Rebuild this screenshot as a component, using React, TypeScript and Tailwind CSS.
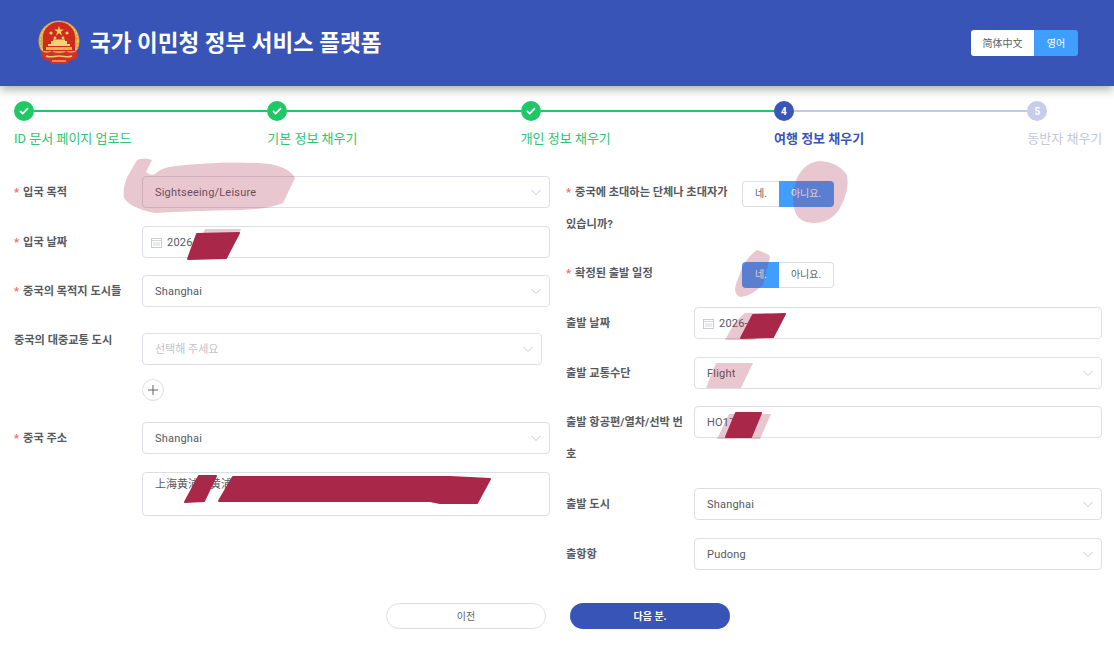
import type { ReactNode } from 'react';

const steps = [
  { label: 'ID 문서 페이지 업로드', state: 'done' },
  { label: '기본 정보 채우기', state: 'done' },
  { label: '개인 정보 채우기', state: 'done' },
  { label: '여행 정보 채우기', state: 'active' },
  { label: '동반자 채우기', state: 'todo' },
];

const Chevron = () => (
  <svg width="12" height="12" viewBox="0 0 12 12" fill="none" className="shrink-0">
    <path d="M1.5 4 6 8.5 10.5 4" stroke="#c8ccd4" strokeWidth="1" />
  </svg>
);

const CalendarIcon = () => (
  <svg width="11" height="11" viewBox="0 0 11 11" fill="none" className="mr-[5px] shrink-0">
    <rect x="0.5" y="1.5" width="10" height="9" stroke="#c8ccd4" />
    <path d="M0.5 3.5h10M2 6h7M2 8h7" stroke="#d5d8de" />
  </svg>
);

const Emblem = () => (
  <svg width="42" height="46" viewBox="0 0 42 46" className="shrink-0">
    <circle cx="21" cy="21" r="20.5" fill="#d9a441" />
    <circle cx="21" cy="21" r="18.8" fill="none" stroke="#f0c96a" strokeWidth="1.5" strokeDasharray="2 1.5" />
    <path d="M5 31V17A16 15 0 0 1 37 17V31Z" fill="#cf2a20" />
    <path d="M21 6l1.2 3.6h3.6l-3 2.2 1.2 3.6-3-2.2-3 2.2 1.2-3.6-3-2.2h3.6Z" fill="#f7d35c" />
    <circle cx="13" cy="13" r="1.6" fill="#f7d35c" />
    <circle cx="29" cy="13" r="1.6" fill="#f7d35c" />
    <circle cx="17" cy="18" r="1.4" fill="#f7d35c" />
    <circle cx="25" cy="18" r="1.4" fill="#f7d35c" />
    <path d="M10 24h22v2H10ZM13 21h16v3H13ZM15 19.5h12v1.5H15Z" fill="#f3d27a" />
    <path d="M8 27h26v3H8Z" fill="#e8b64f" />
    <path d="M3 30c4 4 8 3 11 1 3 3 11 3 14 0 3 2 7 3 11-1l1 7c-3 3-7 3-9 4l-1 3H13l-1-3c-3-1-6-1-9-4Z" fill="#d4302a" />
    <path d="M8 36c4 2 8 0 13 0s9 2 13 0" stroke="#f0c96a" strokeWidth="1.6" fill="none" />
    <path d="M14 41h14" stroke="#f0c96a" strokeWidth="1.2" />
  </svg>
);

const Step = ({ label, state, last }: { label: string; state: string; last?: boolean }) => {
  const lineColor = state === 'done' ? 'bg-[#1fc766]' : 'bg-[#c1c9e5]';
  const circle =
    state === 'done' ? 'bg-[#1fc766]' : state === 'active' ? 'bg-[#3955b8]' : 'bg-[#c6cdea]';
  const text =
    state === 'done'
      ? 'text-[#2ec472]'
      : state === 'active'
        ? 'text-[#3955b8] font-bold'
        : 'text-[#c3c8d9]';
  const num = state === 'active' ? '4' : '5';
  return (
    <div className={last ? 'w-[74px] shrink-0' : 'w-[253.33px] shrink-0'}>
      <div className="flex h-5 items-center">
        <div className={`flex h-5 w-5 shrink-0 items-center justify-center rounded-full ${circle}`}>
          {state === 'done' ? (
            <svg width="10" height="8" viewBox="0 0 10 8" fill="none">
              <path d="M1 4l2.7 2.6L9 1.2" stroke="#fff" strokeWidth="1.8" />
            </svg>
          ) : (
            <span className="text-[10px] font-bold text-white">{num}</span>
          )}
        </div>
        {!last && <div className={`h-[2px] flex-1 ${lineColor}`} />}
      </div>
      <div className={`mt-2 whitespace-nowrap text-[13px] leading-5 ${text}`}>{label}</div>
    </div>
  );
};

const Label = ({
  required,
  children,
  width,
  compact,
}: {
  required?: boolean;
  children: ReactNode;
  width: string;
  compact?: boolean;
}) => (
  <div
    className={`shrink-0 pr-[8px] text-[11.2px] font-bold text-[#555a61] ${width} ${
      compact ? 'leading-[15px]' : '-mb-px pt-px leading-8'
    }`}
  >
    {required && <span className="mr-1 text-[#f56c6c]">*</span>}
    {children}
  </div>
);

const Select = ({ value, placeholder, className }: { value?: string; placeholder?: string; className?: string }) => (
  <div
    className={`flex h-8 items-center justify-between rounded-[4px] border border-[#dcdfe6] bg-white pl-3 pr-[7px] text-[11px] ${className ?? 'w-full'}`}
  >
    <span className={`pt-[2px] ${placeholder ? 'text-[#c0c4cc]' : 'tracking-[0.2px] text-[#555a61]'}`}>
      {value ?? placeholder}
    </span>
    <Chevron />
  </div>
);

const DateField = ({ value }: { value: string }) => (
  <div className="flex h-8 w-full items-center rounded-[4px] border border-[#dcdfe6] bg-white pl-2 text-[11px] tracking-[0.2px] text-[#555a61]">
    <CalendarIcon />
    <span className="pt-[2px]">{value}</span>
  </div>
);

const Toggle = ({ yes }: { yes: boolean }) => (
  <div className="mt-[5px] flex h-[26px] w-[92px] shrink-0 text-[10px] leading-none">
    <div
      className={`flex w-[37px] items-center justify-center rounded-l-[4px] border-y border-l ${
        yes ? 'border-[#409eff] bg-[#409eff] text-white' : 'border-[#dcdfe6] bg-white text-[#606266]'
      }`}
    >
      네.
    </div>
    <div
      className={`flex flex-1 items-center justify-center rounded-r-[4px] border-y border-r ${
        yes ? 'border-[#dcdfe6] bg-white text-[#606266]' : 'border-[#409eff] bg-[#409eff] text-white'
      }`}
    >
      아니요.
    </div>
  </div>
);

const Row = ({ className, children }: { className?: string; children: ReactNode }) => (
  <div className={`flex items-start ${className ?? ''}`}>{children}</div>
);

// the hand-drawn redaction marks that lie over the form
const Redactions = () => (
  <svg width="1114" height="646" viewBox="0 0 1114 646" className="pointer-events-none absolute left-0 top-0">
    <g fill="#a9284a" fillOpacity="0.26">
      <path d="M137 160Q145 157 152 160L146 172Q150 176 155 174Q160 168 175 166Q230 160 270 164Q290 168 295 178L283 203Q270 209 240 210Q190 211 155 213Q130 208 124 198Q122 185 130 172Z" />
      <path d="M820 161Q838 162 847 175Q850 190 840 208Q832 222 815 223Q800 224 795 212Q790 197 797 178Q805 162 820 161Z" />
      <path d="M757 250Q770 254 770 257L763 285Q750 297 740 297Q733 294 736 284L742 268Q748 256 757 250Z" />
      <path d="M745 313 770 313 755 340 725 340 735 322Z" />
      <path d="M716 363 753 363 741 388 706 388Z" />
      <path d="M729 414 771 414 760 439 717 439Z" />
      <path d="M205 229 241 229 236 240 200 240Z" />
    </g>
    <g fill="#a9284a" stroke="#a9284a" strokeWidth="2" strokeLinejoin="round">
      <path d="M197 234 239 233 226 258 188 259Z" />
      <path d="M753 315 785 314 773 337 741 338Z" />
      <path d="M736 413 761 413 751 437 726 437Z" />
      <path d="M199 476 216 476 204 501 185 502Z" />
      <path d="M233 477 450 477 490 479 477 503 440 503 430 501 219 501Z" />
    </g>
  </svg>
);

export default function App() {
  return (
    <div
      className="relative h-[646px] w-[1114px] overflow-hidden bg-white"
      style={{ fontFamily: 'Roboto, "Noto Sans CJK KR", sans-serif' }}
    >
      <header className="relative z-10 flex h-[86px] items-center justify-between bg-[#3954b7] pl-[38px] pr-9 shadow-[0_3px_10px_rgba(0,0,0,0.35)]">
        <div className="flex items-center">
          <Emblem />
          <h1 className="ml-[10px] text-[22.5px] font-bold leading-8 text-white">국가 이민청 정부 서비스 플랫폼</h1>
        </div>
        <div className="flex h-[26px] overflow-hidden rounded-[3px] text-[10px]">
          <div className="flex w-[63px] items-center justify-center bg-white text-[#606266]">简体中文</div>
          <div className="flex w-[44px] items-center justify-center bg-[#409eff] text-white">영어</div>
        </div>
      </header>

      <div className="flex pl-[14px] pt-[15px]">
        {steps.map((s, i) => (
          <Step key={s.label} label={s.label} state={s.state} last={i === steps.length - 1} />
        ))}
      </div>

      <div className="flex pl-[14px] pt-[27px]">
        <div className="w-[536px] shrink-0">
          <Row className="mb-[18px]">
            <Label required width="w-[128px]">입국 목적</Label>
            <Select value="Sightseeing/Leisure" />
          </Row>
          <Row className="mb-[17px]">
            <Label required width="w-[128px]">입국 날짜</Label>
            <DateField value="2026-" />
          </Row>
          <Row className="mb-[26px]">
            <Label required width="w-[128px]">중국의 목적지 도시들</Label>
            <Select value="Shanghai" />
          </Row>
          <Row className="mb-[14px]">
            <Label compact width="w-[128px]">중국의 대중교통 도시</Label>
            <Select placeholder="선택해 주세요" className="w-[400px]" />
          </Row>
          <div className="mb-[21px] ml-[128px] flex h-[22px] w-[22px] items-center justify-center rounded-full border border-[#dcdfe6]">
            <svg width="10" height="10" viewBox="0 0 10 10" fill="none">
              <path d="M5 0v10M0 5h10" stroke="#606266" strokeWidth="1" />
            </svg>
          </div>
          <Row className="mb-[18px]">
            <Label required width="w-[128px]">중국 주소</Label>
            <Select value="Shanghai" />
          </Row>
          <div className="ml-[128px] h-11 rounded-[4px] border border-[#dcdfe6] px-3 py-[3px] text-[11px] leading-[18px] text-[#555a61]">
            上海黄浦区黄浦区
          </div>
        </div>

        <div className="ml-4 w-[536px] shrink-0">
          <Row className="mb-[17px]">
            <Label required width="w-[176px]">중국에 초대하는 단체나 초대자가 있습니까?</Label>
            <Toggle yes={false} />
          </Row>
          <Row className="mb-[18px]">
            <Label required width="w-[176px]">확정된 출발 일정</Label>
            <Toggle yes />
          </Row>
          <Row className="mb-[18px]">
            <Label width="w-[128px]">출발 날짜</Label>
            <DateField value="2026-" />
          </Row>
          <Row className="mb-[17px]">
            <Label width="w-[128px]">출발 교통수단</Label>
            <Select value="Flight" />
          </Row>
          <Row className="mb-[18px]">
            <Label width="w-[128px]">출발 항공편/열차/선박 번호</Label>
            <div className="flex h-8 w-full items-center rounded-[4px] border border-[#dcdfe6] pl-3 text-[11px] tracking-[0.2px] text-[#555a61]">
              <span className="pt-[2px]">HO17</span>
            </div>
          </Row>
          <Row className="mb-[18px]">
            <Label width="w-[128px]">출발 도시</Label>
            <Select value="Shanghai" />
          </Row>
          <Row>
            <Label width="w-[128px]">출항항</Label>
            <Select value="Pudong" />
          </Row>
        </div>
      </div>

      <div className="mt-[33px] flex justify-center gap-6 pl-[2px] text-[10px]">
        <div className="flex h-[26px] w-40 items-center justify-center rounded-full border border-[#dcdfe6] text-[#606266]">
          이전
        </div>
        <div className="flex h-[26px] w-40 items-center justify-center rounded-full bg-[#3954b7] font-bold text-white">
          다음 분.
        </div>
      </div>

      <Redactions />
    </div>
  );
}
